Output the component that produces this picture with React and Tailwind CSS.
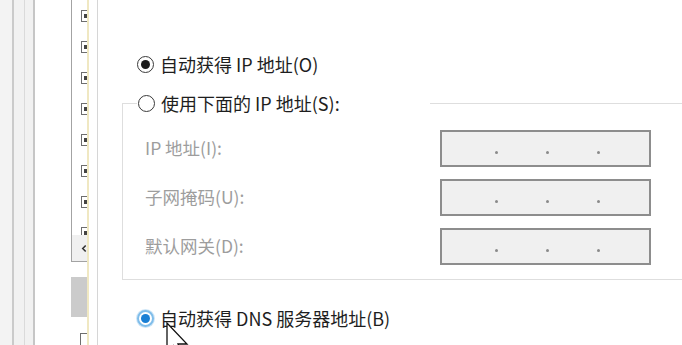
import React from 'react';

const font = { fontFamily: '"Noto Sans CJK SC", "Noto Sans", sans-serif' };

// left-hand strip: the window behind the dialog
const ListItem = () => (
  <div className="h-[31px] flex items-center pl-[9px]">
    <div className="w-[7px] h-[12px] border-l border-y border-[#6e6e6e] flex items-center pl-[2px]">
      <div className="w-[3px] h-[4px] bg-[#444]" />
    </div>
  </div>
);

const BackWindow = () => (
  <div className="flex h-full shrink-0">
    <div className="w-[12px] bg-[#f3f3f3]" />
    <div className="w-[2px] bg-[#cacaca]" />
    <div className="w-[10px] bg-[#f1f1f1]" />
    <div className="w-[1px] bg-[#dadada]" />
    <div className="w-[8px] bg-[#f1f1f1]" />
    <div className="w-[2px] bg-[#c6c6c6]" />
    <div className="w-[36px] bg-white" />
    <div className="w-[16px] flex flex-col">
      <div className="h-[262px] border-l border-b border-[#a3a3a3] flex flex-col">
        <div className="flex-1 overflow-hidden">
          {[0, 1, 2, 3, 4, 5, 6, 7].map((i) => (
            <ListItem key={i} />
          ))}
        </div>
        <div className="h-[26px] bg-[#f0f0f0] flex items-center pl-[9px]">
          <svg width="7" height="9" viewBox="0 0 7 9">
            <path d="M5.5 1 L2 4.5 L5.5 8" stroke="#333" strokeWidth="1.8" fill="none" />
          </svg>
        </div>
      </div>
      <div className="mt-[15px] h-[41px] bg-[#cbcbcb]" />
      <div className="mt-[16px] ml-[9px] w-[7px] h-[12px] border-l border-t border-[#6e6e6e]" />
    </div>
    <div className="w-[2px] bg-[#f0e8c2]" />
    <div className="w-[8px] bg-white" />
    <div className="w-[1px] bg-[#d6d6d6]" />
  </div>
);

const Radio = ({ state }) => {
  if (state === 'blue') {
    return (
      <span className="w-[17px] h-[17px] rounded-full border-2 border-[#7fbdea] bg-white flex items-center justify-center shrink-0 shadow-[0_0_0_1px_#cfe6f7]">
        <span className="w-[9px] h-[9px] rounded-full bg-[#1a7fd4]" />
      </span>
    );
  }
  return (
    <span className="w-[17px] h-[17px] rounded-full border-[1.5px] border-[#3a3a3a] bg-white flex items-center justify-center shrink-0">
      {state === 'on' && <span className="w-[9px] h-[9px] rounded-full bg-[#1c1c1c]" />}
    </span>
  );
};

const IpBox = () => (
  <div className="w-[211px] h-[37px] border-2 border-[#8d8d8d] bg-[#f0f0f0] flex items-center pl-[5px]">
    <span className="w-[48px]" />
    <span className="w-[3px] h-[3px] rounded-full bg-[#8a8a8a] mt-[7px]" />
    <span className="w-[48px]" />
    <span className="w-[3px] h-[3px] rounded-full bg-[#8a8a8a] mt-[7px]" />
    <span className="w-[48px]" />
    <span className="w-[3px] h-[3px] rounded-full bg-[#8a8a8a] mt-[7px]" />
  </div>
);

const fields = ['IP 地址(I):', '子网掩码(U):', '默认网关(D):'];

export default function App() {
  return (
    <div className="w-[682px] h-[345px] overflow-hidden bg-white flex relative" style={font}>
      <BackWindow />

      {/* dialog body */}
      <div className="flex-1 flex flex-col pt-[52px] text-[18px] text-[#1e1e1e]">
        <label className="h-[24px] flex items-center gap-[6px] pl-[39px]">
          <Radio state="on" />
          <span>自动获得 IP 地址(O)</span>
        </label>

        <fieldset className="mt-[15px] ml-[24px] w-[620px] border border-[#dedede] px-[14px] pt-[15px] pb-[14px]">
          <legend className="w-[293px] h-[24px] flex items-center gap-[6px] pl-[1px]">
            <Radio state="off" />
            <span>使用下面的 IP 地址(S):</span>
          </legend>
          <div className="flex flex-col gap-3 pl-[8px]">
            {fields.map((f) => (
              <div key={f} className="flex items-center">
                <span className="w-[295px] text-[17.5px] text-[#9d9d9d]">{f}</span>
                <IpBox />
              </div>
            ))}
          </div>
        </fieldset>

        <label className="mt-[26px] h-[24px] flex items-center gap-[6px] pl-[39px]">
          <Radio state="blue" />
          <span>自动获得 DNS 服务器地址(B)</span>
        </label>
      </div>

      {/* mouse pointer */}
      <svg className="absolute left-[166px] top-[322px]" width="24" height="34" viewBox="0 0 24 34">
        <path d="M1 1 L1 30 L7.5 23.5 L12 33 L16 31 L12 22 L21 22 Z" fill="white" stroke="#111" strokeWidth="1.3" strokeLinejoin="miter" />
      </svg>
    </div>
  );
}
